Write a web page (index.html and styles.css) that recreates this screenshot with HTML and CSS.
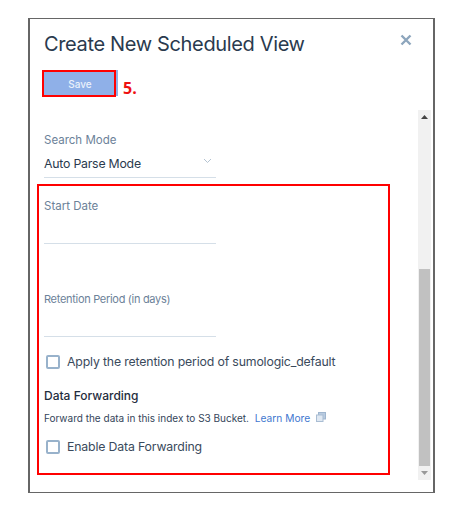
FILE: index.html
```html
<!DOCTYPE html>
<html lang="en">
<head>
<meta charset="utf-8">
<title>Create New Scheduled View</title>
<link rel="stylesheet" href="styles.css">
</head>
<body>
<div class="panel">
  <header class="head">
    <h1 class="title">Create New Scheduled View</h1>
    <svg class="close" width="12" height="12" viewBox="0 0 12 12"><path d="M1.5 1.5l9 9M10.5 1.5l-9 9" stroke="#8da6bd" stroke-width="2.4" fill="none"/></svg>
  </header>
  <div class="actions">
    <button class="save">Save</button>
    <span class="step">5.</span>
  </div>
  <div class="scrollarea">
    <div class="form">
      <div class="label first">Search Mode</div>
      <div class="select"><span>Auto Parse Mode</span>
        <svg class="chev" width="9" height="6" viewBox="0 0 9 6"><path d="M1 1l3.5 3.5L8 1" stroke="#b4c3d1" stroke-width="1" fill="none"/></svg>
      </div>
      <div class="label start">Start Date</div>
      <div class="input tall"></div>
      <div class="label retention">Retention Period (in days)</div>
      <div class="input tall2"></div>
      <label class="check c1"><span class="box"></span>Apply the retention period of sumologic_default</label>
      <div class="section">Data Forwarding</div>
      <div class="hint">Forward the data in this index to S3 Bucket. <a class="link">Learn More</a>
        <svg class="ext" width="10" height="10" viewBox="0 0 10 10"><rect x="2.5" y="0.5" width="7" height="6.5" fill="#b9cbe0" stroke="#9fb6cf"/><rect x="0.5" y="3" width="6.5" height="6.5" fill="#dfe8f2" stroke="#a9bdd3"/></svg>
      </div>
      <label class="check c2"><span class="box"></span>Enable Data Forwarding</label>
    </div>
    <div class="scrollbar">
      <div class="arrow"><svg width="7" height="4" viewBox="0 0 7 4"><path d="M3.5 0L7 4H0z" fill="#444"/></svg></div>
      <div class="track"><div class="thumb"></div></div>
      <div class="arrow"><svg width="7" height="4" viewBox="0 0 7 4"><path d="M0 0h7L3.5 4z" fill="#999"/></svg></div>
    </div>
  </div>
  <div class="mark mark-save"></div>
  <div class="mark mark-form"></div>
</div>
</body>
</html>
```
FILE: styles.css
```css
* { box-sizing: border-box; }
html, body { margin: 0; padding: 0; background: #fff; }
body { width: 452px; height: 508px; padding: 18px 17px 15px 28px; font-family: Inter, "Noto Sans", sans-serif; color: #1f2d3d; }
.panel { position: relative; width: 407px; height: 475px; border: 1px solid #666; border-left-width: 2px; border-right-width: 2px; background: #fff; padding-left: 14px; }
.head { display: flex; justify-content: space-between; align-items: flex-start; padding-top: 12px; padding-right: 21px; height: 51px; }
.title { margin: 0; font-size: 20px; line-height: 26px; font-weight: 400; color: #2a3a4e; letter-spacing: -0.35px; }
.close { margin-top: 3px; }
.actions { display: flex; align-items: center; height: 26px; }
.save { width: 74px; height: 26px; border: 0; background: #8fb0e8; color: #eaf1fb; font: 500 10px Inter, sans-serif; padding: 2px 2px 0 0; }
.step { margin-left: 5px; margin-top: 10px; font: 700 16px "Open Sans", sans-serif; color: #ee1111; }
.scrollarea { display: flex; justify-content: space-between; margin-top: 14px; height: 370px; padding-right: 2px; }
.form { width: 330px; }
.label { font-size: 11.5px; line-height: 14px; color: #6c8299; }
.first { margin-top: 23px; }
.select { display: flex; justify-content: space-between; width: 172px; height: 29px; border-bottom: 1px solid #d5dfe8; font-size: 12.3px; line-height: 20px; padding: 5px 4px 0 0; margin-top: 2px; color: #2a3a4e; letter-spacing: -0.22px; }
.chev { margin-top: 4px; }
.start { margin-top: 21px; }
.input { width: 172px; border-bottom: 1px solid #d5dfe8; }
.tall { height: 31px; }
.retention { margin-top: 48px; font-size: 11px; letter-spacing: -0.3px; }
.tall2 { height: 31px; }
.check { display: flex; align-items: center; font-size: 12.3px; line-height: 18px; color: #3a4a5c; letter-spacing: -0.16px; }
.c1 { margin-top: 16px; }
.c2 { margin-top: 12px; }
.box { width: 14px; height: 14px; margin: 0 7px 0 2px; border: 2px solid #98b2cb; border-radius: 2px; background: #fff; }
.section { margin-top: 17px; font-size: 12px; line-height: 16px; font-weight: 500; color: #1f2d3d; }
.hint { margin-top: 6px; font-size: 10px; line-height: 16px; color: #34455a; white-space: nowrap; }
.link { color: #3f78d0; margin-left: 3px; font-size: 10.2px; }
.ext { margin-left: 3px; }
.scrollbar { width: 13px; display: flex; flex-direction: column; background: #f1f1f1; }
.arrow { height: 14px; display: flex; align-items: center; justify-content: center; }
.track { flex: 1; display: flex; flex-direction: column; justify-content: flex-end; }
.thumb { height: 197px; margin: 0 1px; background: #c1c1c1; }
.mark { position: absolute; border: 2px solid #f00; }
.mark-save { left: 12px; top: 51px; width: 74px; height: 27px; }
.mark-form { left: 7px; top: 165px; width: 353px; height: 291px; }
```
